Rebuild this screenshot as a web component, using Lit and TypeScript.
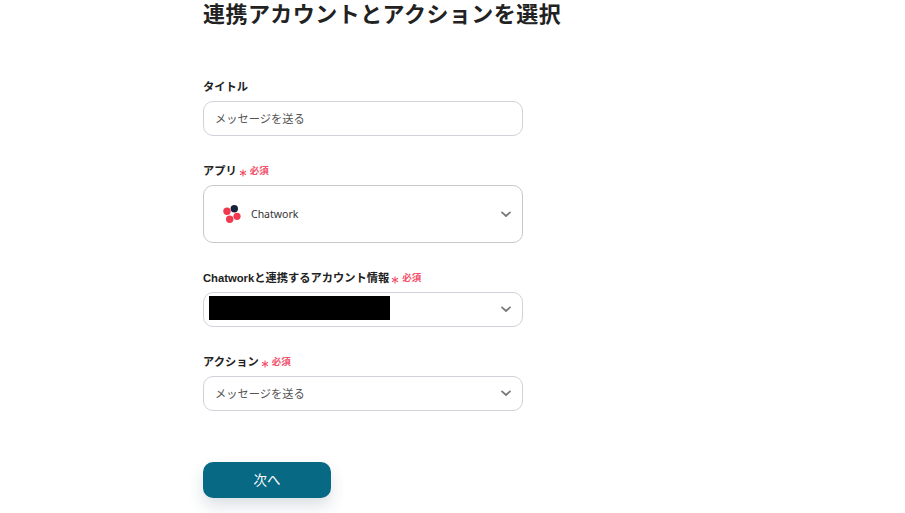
import { LitElement, html, css, svg } from 'lit';
import { customElement } from 'lit/decorators.js';

const chevron = svg`<svg class="chevron" width="10" height="7" viewBox="0 0 10 7"><path d="M1 1.4l4 3.6 4-3.6" fill="none" stroke="#777" stroke-width="1.7" stroke-linecap="round" stroke-linejoin="round"/></svg>`;

const chatworkLogo = svg`<svg width="20" height="20" viewBox="0 0 20 20">
  <circle cx="12.3" cy="4.7" r="3.7" fill="#14233a"/>
  <circle cx="5" cy="7.3" r="3.7" fill="#f0384f"/>
  <circle cx="15" cy="12.3" r="3.6" fill="#f0384f"/>
  <circle cx="7.7" cy="15.3" r="3.7" fill="#f0384f"/>
</svg>`;

@customElement('app-root')
export class AppRoot extends LitElement {
  static override styles = css`
    :host {
      display: block;
      width: 905px;
      height: 513px;
      overflow: hidden;
      background: #fff;
      color: #222;
      font-family: 'Noto Sans CJK JP', 'Noto Sans', sans-serif;
    }

    .page {
      width: 320px;
      margin-left: 203px;
      display: flex;
      flex-direction: column;
    }

    h1 {
      margin: 0 0 53px;
      width: 400px;
      height: 24px;
      font-size: 22px;
      line-height: 24px;
      font-weight: 700;
      letter-spacing: 0.45px;
      color: #222;
      white-space: nowrap;
    }

    .field {
      display: flex;
      flex-direction: column;
      gap: 6px;
    }

    .label {
      display: flex;
      align-items: center;
      box-sizing: border-box;
      height: 18px;
      padding-top: 2px;
      font-family: 'Liberation Sans', 'Noto Sans CJK JP', sans-serif;
      font-size: 11.25px;
      line-height: 16px;
      font-weight: 700;
      color: #222;
      white-space: nowrap;
    }

    .star {
      margin-left: 2px;
      width: 8px;
      height: 8px;
      margin-top: 3px;
    }

    .req {
      margin-left: 3px;
      font-size: 9.5px;
      font-weight: 700;
      color: #f2506a;
    }

    .box {
      display: flex;
      align-items: center;
      box-sizing: border-box;
      height: 35px;
      padding: 0 11px;
      background: #fff;
      border: 1px solid #cfd2d8;
      border-radius: 10px;
      font-size: 11.25px;
      color: #555;
    }

    .box.app {
      height: 58px;
      padding-left: 18px;
      border-color: #c8c8c8;
      color: #333;
      font-size: 10.5px;
      font-family: 'Noto Sans', 'Noto Sans CJK JP', sans-serif;
    }

    .box.app svg:first-child {
      margin-right: 9px;
    }

    .box.app .value {
      padding-bottom: 0;
    }

    .box.account {
      padding-left: 5px;
    }

    .value {
      flex: 1;
      padding-bottom: 2px;
    }

    .redacted {
      width: 181px;
      height: 24px;
      margin-bottom: 4px;
      background: #000;
    }

    .chevron {
      margin-left: auto;
      flex: none;
    }

    .next {
      align-self: flex-start;
      width: 128px;
      height: 36px;
      margin-top: 51px;
      padding: 0 0 2px;
      border: none;
      border-radius: 10px;
      background: #086984;
      color: #fff;
      font: inherit;
      font-size: 13.5px;
      box-shadow: 0 8px 16px rgba(40, 60, 90, 0.16);
    }
  `;

  private required() {
    return html`<svg class="star" viewBox="0 0 8 8"><path d="M4 .5v7M1 2.2l6 3.6M7 2.2L1 5.8" stroke="#f2506a" stroke-width="1.1" fill="none"/></svg><span class="req">必須</span>`;
  }

  override render() {
    return html`
      <div class="page">
        <h1>連携アカウントとアクションを選択</h1>

        <div class="field">
          <div class="label">タイトル</div>
          <div class="box"><span class="value">メッセージを送る</span></div>
        </div>

        <div class="field" style="margin-top:25px">
          <div class="label">アプリ${this.required()}</div>
          <div class="box app">${chatworkLogo}<span class="value">Chatwork</span>${chevron}</div>
        </div>

        <div class="field" style="margin-top:25px">
          <div class="label">Chatworkと連携するアカウント情報${this.required()}</div>
          <div class="box account"><div class="redacted"></div>${chevron}</div>
        </div>

        <div class="field" style="margin-top:25px">
          <div class="label">アクション${this.required()}</div>
          <div class="box"><span class="value">メッセージを送る</span>${chevron}</div>
        </div>

        <button class="next">次へ</button>
      </div>
    `;
  }
}

declare global {
  interface HTMLElementTagNameMap {
    'app-root': AppRoot;
  }
}
